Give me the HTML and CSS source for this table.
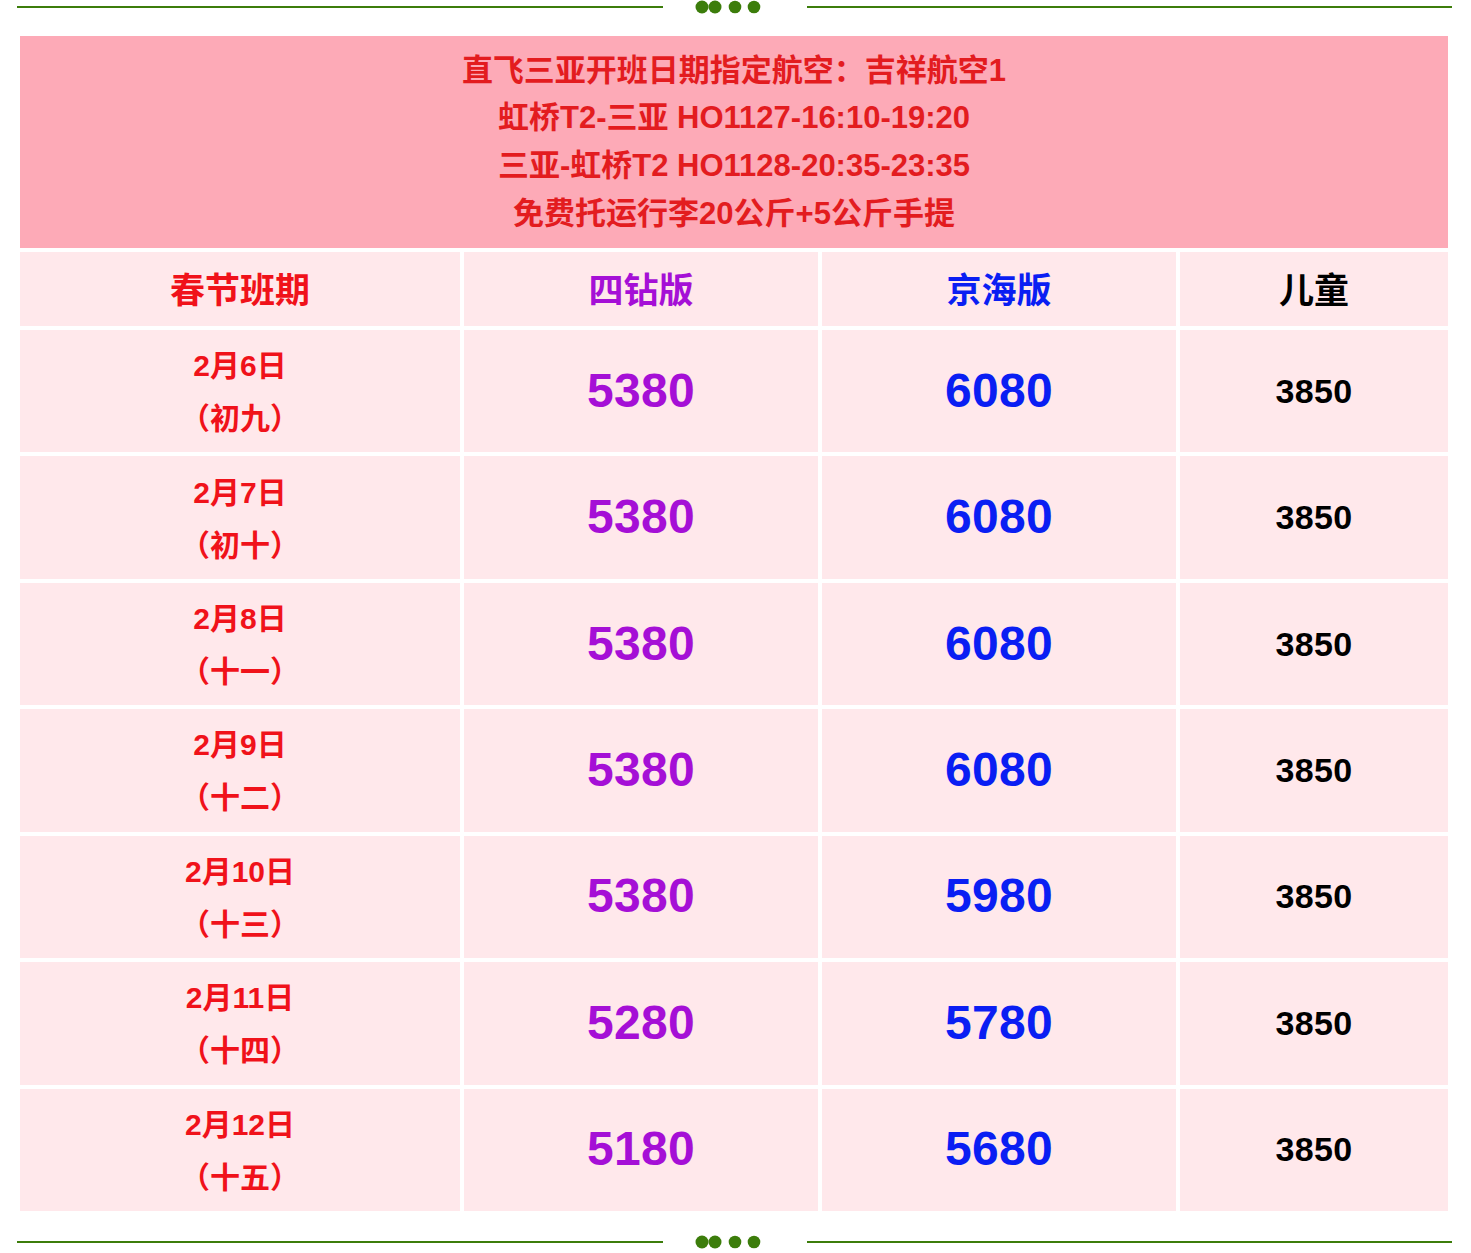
FILE: index.html
```html
<!DOCTYPE html>
<html lang="zh-CN">
<head>
<meta charset="utf-8">
<title>春节班期</title>
<link rel="stylesheet" href="styles.css">
</head>
<body>
<div class="page">
  <div class="divider divider-top">
    <span class="line"></span>
    <svg class="dots" width="144" height="14" viewBox="0 0 144 14"><circle cx="39" cy="7" r="6.5"/><circle cx="52" cy="7" r="6.5"/><circle cx="72" cy="7" r="6.3"/><circle cx="91" cy="7" r="6.3"/></svg>
    <span class="line"></span>
  </div>

  <div class="grid">
    <div class="banner">
      <p>直飞三亚开班日期指定航空：吉祥航空1</p>
      <p>虹桥T2-三亚 HO1127-16:10-19:20</p>
      <p>三亚-虹桥T2 HO1128-20:35-23:35</p>
      <p>免费托运行李20公斤+5公斤手提</p>
    </div>

    <div class="cell head red">春节班期</div>
    <div class="cell head purple">四钻版</div>
    <div class="cell head blue">京海版</div>
    <div class="cell head black">儿童</div>

    <div class="cell date"><span>2月6日</span><span>（初九）</span></div>
    <div class="cell price purple">5380</div>
    <div class="cell price blue">6080</div>
    <div class="cell child">3850</div>

    <div class="cell date"><span>2月7日</span><span>（初十）</span></div>
    <div class="cell price purple">5380</div>
    <div class="cell price blue">6080</div>
    <div class="cell child">3850</div>

    <div class="cell date"><span>2月8日</span><span>（十一）</span></div>
    <div class="cell price purple">5380</div>
    <div class="cell price blue">6080</div>
    <div class="cell child">3850</div>

    <div class="cell date"><span>2月9日</span><span>（十二）</span></div>
    <div class="cell price purple">5380</div>
    <div class="cell price blue">6080</div>
    <div class="cell child">3850</div>

    <div class="cell date"><span>2月10日</span><span>（十三）</span></div>
    <div class="cell price purple">5380</div>
    <div class="cell price blue">5980</div>
    <div class="cell child">3850</div>

    <div class="cell date"><span>2月11日</span><span>（十四）</span></div>
    <div class="cell price purple">5280</div>
    <div class="cell price blue">5780</div>
    <div class="cell child">3850</div>

    <div class="cell date"><span>2月12日</span><span>（十五）</span></div>
    <div class="cell price purple">5180</div>
    <div class="cell price blue">5680</div>
    <div class="cell child">3850</div>
  </div>

  <div class="divider divider-bottom">
    <span class="line"></span>
    <svg class="dots" width="144" height="14" viewBox="0 0 144 14"><circle cx="39" cy="7" r="6.5"/><circle cx="52" cy="7" r="6.5"/><circle cx="72" cy="7" r="6.3"/><circle cx="91" cy="7" r="6.3"/></svg>
    <span class="line"></span>
  </div>
</div>
</body>
</html>
```

FILE: styles.css
```css
html, body {
  margin: 0;
  padding: 0;
  background: #ffffff;
}

body {
  font-family: "Liberation Sans", "Noto Sans CJK SC", sans-serif;
  font-weight: bold;
}

.page {
  width: 1471px;
}

.divider {
  display: flex;
  align-items: center;
  height: 14px;
  padding: 0 19px 0 17px;
}

.divider .line {
  flex: 1;
  height: 2px;
  background: #3c7d0b;
}

.divider .dots {
  display: block;
  flex: none;
  fill: #3c7d0b;
}

.divider-bottom {
  margin-top: 24px;
}

.grid {
  display: grid;
  grid-template-columns: 440px 354px 354px 268px;
  grid-template-rows: 212px 74px;
  grid-auto-rows: 122.43px;
  gap: 4px;
  margin: 22px 0 0 20px;
  width: 1428px;
}

.banner {
  grid-column: 1 / -1;
  background: #fdaab7;
  color: #e31c1f;
  font-size: 31px;
  line-height: 47.6px;
  text-align: center;
  display: flex;
  flex-direction: column;
  justify-content: center;
}

.banner p {
  margin: 0;
}

.cell {
  background: #ffe8eb;
  display: flex;
  flex-direction: column;
  align-items: center;
  justify-content: center;
  text-align: center;
}

.head {
  font-size: 35px;
  padding-bottom: 3px;
}

.date {
  color: #f0121a;
  font-size: 30px;
  line-height: 53px;
  padding-top: 2px;
}

.date span {
  display: block;
}

.price {
  font-size: 48px;
  letter-spacing: 0.3px;
  padding-bottom: 2px;
}

.child {
  font-size: 34px;
  letter-spacing: 0.3px;
  color: #000000;
}

.red { color: #f0121a; }
.purple { color: #a50fd6; }
.blue { color: #0a1ef3; }
.black { color: #000000; }
```
